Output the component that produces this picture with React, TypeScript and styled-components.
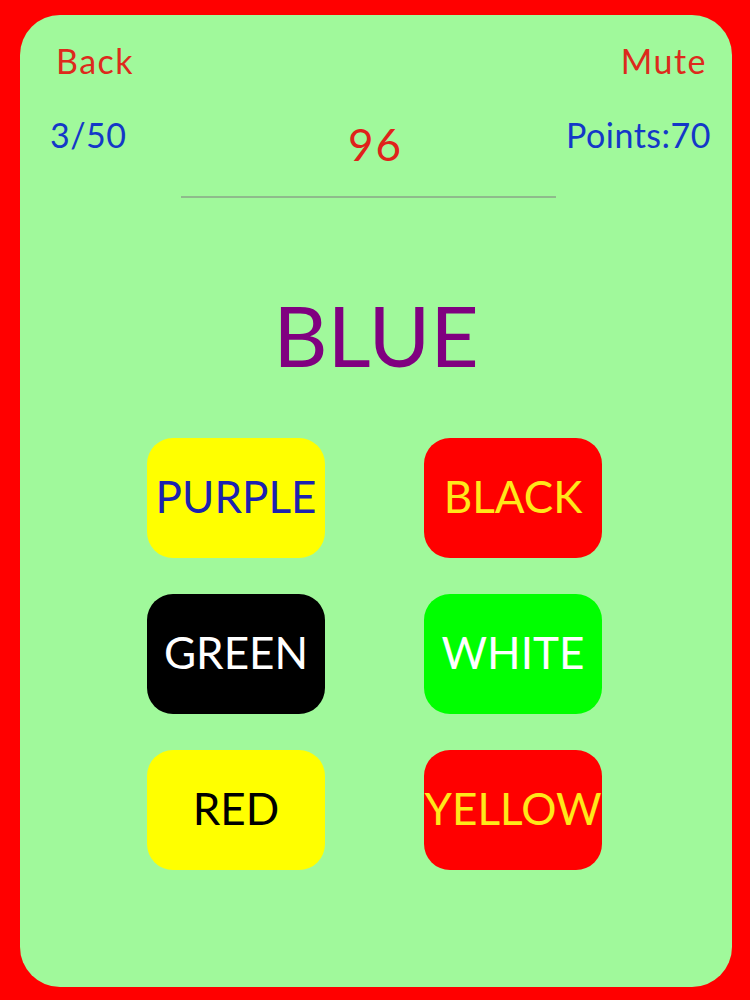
import React from 'react';
import styled, { createGlobalStyle } from 'styled-components';

const GlobalStyle = createGlobalStyle`
  html, body {
    margin: 0;
    padding: 0;
    background: #ff0000;
  }
  body {
    font-family: Lato, "Liberation Sans", sans-serif;
  }
`;

const Screen = styled.div`
  width: 750px;
  height: 1000px;
  box-sizing: border-box;
  padding: 15px 18px 13px 20px;
  background: #ff0000;
`;

const Panel = styled.div`
  height: 100%;
  box-sizing: border-box;
  background: #a0f99b;
  border-radius: 40px;
  display: flex;
  flex-direction: column;
  align-items: center;
`;

const TopBar = styled.div`
  width: 100%;
  box-sizing: border-box;
  display: flex;
  justify-content: space-between;
  padding: 29px 25px 0 36px;
`;

const NavLink = styled.div`
  font-size: 34px;
  line-height: 1;
  letter-spacing: 1.5px;
  color: #dd2a1c;
`;

const StatusRow = styled.div`
  width: 100%;
  box-sizing: border-box;
  display: grid;
  grid-template-columns: 1fr auto 1fr;
  align-items: start;
  padding: 40px 21px 0 30px;
`;

const Stat = styled.div<{ align: 'left' | 'right' }>`
  font-size: 34px;
  line-height: 1;
  letter-spacing: 0.5px;
  color: #1438c8;
  text-align: ${p => p.align};
`;

const Timer = styled.div`
  font-size: 44px;
  line-height: 1;
  letter-spacing: 2px;
  color: #e0221a;
  margin-top: 4px;
  margin-right: 10px;
`;

const Divider = styled.div`
  width: 375px;
  height: 2px;
  background: #8fbb8c;
  margin-top: 30px;
  margin-right: 16px;
`;

const Word = styled.div`
  font-size: 84px;
  line-height: 1;
  color: #800080;
  margin-top: 95px;
`;

const Choices = styled.div`
  display: grid;
  grid-template-columns: 178px 178px;
  column-gap: 99px;
  row-gap: 36px;
  margin-top: 61px;
  margin-right: 3px;
`;

const Choice = styled.button<{ bg: string; fg: string }>`
  width: 178px;
  height: 120px;
  border: none;
  border-radius: 26px;
  padding: 0 0 4px;
  background: ${p => p.bg};
  color: ${p => p.fg};
  font-family: Lato, "Liberation Sans", sans-serif;
  font-size: 44px;
  display: flex;
  align-items: center;
  justify-content: center;
  white-space: nowrap;
  overflow: visible;
`;

const choices = [
  { label: 'PURPLE', bg: '#ffff00', fg: '#1c22b0' },
  { label: 'BLACK', bg: '#ff0000', fg: '#ffe81a' },
  { label: 'GREEN', bg: '#000000', fg: '#ffffff' },
  { label: 'WHITE', bg: '#00ff00', fg: '#ffffff' },
  { label: 'RED', bg: '#ffff00', fg: '#000000' },
  { label: 'YELLOW', bg: '#ff0000', fg: '#ffe81a' },
];

export default function App() {
  return (
    <>
      <GlobalStyle />
      <Screen>
        <Panel>
          <TopBar>
            <NavLink>Back</NavLink>
            <NavLink>Mute</NavLink>
          </TopBar>
          <StatusRow>
            <Stat align="left">3/50</Stat>
            <Timer>96</Timer>
            <Stat align="right">Points:70</Stat>
          </StatusRow>
          <Divider />
          <Word>BLUE</Word>
          <Choices>
            {choices.map(c => (
              <Choice key={c.label} bg={c.bg} fg={c.fg}>
                {c.label}
              </Choice>
            ))}
          </Choices>
        </Panel>
      </Screen>
    </>
  );
}
